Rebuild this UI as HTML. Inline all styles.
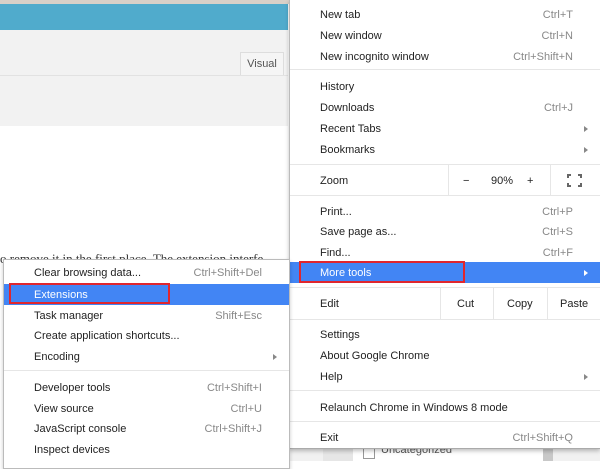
<!DOCTYPE html>
<html><head><meta charset="utf-8"><style>
*{margin:0;padding:0;box-sizing:border-box}
body{width:600px;height:461px;overflow:hidden;position:relative;background:#fff;font-family:"Liberation Sans",sans-serif;font-size:11px;color:#222}
.a{position:absolute}
.it{position:absolute;left:0;right:0;height:21px;line-height:23px}
.it .l{position:absolute;left:30px}
.it .s{position:absolute;right:27px;color:#888}
.it .ar{position:absolute;right:12px;top:8px;width:0;height:0;border-left:4px solid #888;border-top:3px solid transparent;border-bottom:3px solid transparent}
.sep{position:absolute;left:0;right:0;height:1px;background:#e6e6e6}
.hl{background:#4285f4;color:#fff}
.hl .ar{border-left-color:#fff}
.vl{position:absolute;width:1px;background:#e6e6e6}
</style></head><body>
<div class="a" style="left:0;top:0;width:600px;height:4px;background:#d8d0c8"></div>
<div class="a" style="left:0;top:4px;width:288px;height:26px;background:#50abcc"></div>
<div class="a" style="left:0;top:30px;width:288px;height:96px;background:#f2f2f2"></div>
<div class="a" style="left:0;top:75px;width:288px;height:1px;background:#e2e2e2"></div>
<div class="a" style="left:240px;top:52px;width:44px;height:23px;background:#f5f5f5;border:1px solid #ddd;border-bottom:none;font-size:11px;line-height:22px;text-align:center;color:#555">Visual</div>
<div class="a" style="left:0;top:251px;width:288px;height:12px;overflow:hidden;font-family:'Liberation Serif',serif;font-size:13px;line-height:16px;color:#333;white-space:nowrap">o remove it in the first place. The extension interfe</div>
<div class="a" style="left:290px;top:440px;width:310px;height:21px;background:#f1f1f1"></div>
<div class="a" style="left:323px;top:440px;width:30px;height:21px;background:#e6e6e6"></div>
<div class="a" style="left:353px;top:440px;width:190px;height:21px;background:#fff"></div>
<div class="a" style="left:363px;top:447px;width:12px;height:12px;border:1px solid #999;background:#fff"></div>
<div class="a" style="left:381px;top:444px;font-size:11px;color:#555">Uncategorized</div>
<div class="a" style="left:543px;top:440px;width:10px;height:21px;background:#c8c8c8"></div>

<div class="a" style="left:289px;top:0;width:311px;height:449px;background:#fff;border-left:1px solid #bbb;border-bottom:1px solid #aaa;box-shadow:0 2px 4px rgba(0,0,0,.25)">
 <div class="it" style="top:4px"><span class="l">New tab</span><span class="s">Ctrl+T</span></div>
 <div class="it" style="top:25px"><span class="l">New window</span><span class="s">Ctrl+N</span></div>
 <div class="it" style="top:46px"><span class="l">New incognito window</span><span class="s">Ctrl+Shift+N</span></div>
 <div class="sep" style="top:69px"></div>
 <div class="it" style="top:76px"><span class="l">History</span></div>
 <div class="it" style="top:97px"><span class="l">Downloads</span><span class="s">Ctrl+J</span></div>
 <div class="it" style="top:118px"><span class="l">Recent Tabs</span><i class="ar"></i></div>
 <div class="it" style="top:139px"><span class="l">Bookmarks</span><i class="ar"></i></div>
 <div class="sep" style="top:164px"></div>
 <div class="it" style="top:170px"><span class="l">Zoom</span></div>
 <div class="vl" style="left:158px;top:164px;height:31px"></div>
 <div class="vl" style="left:260px;top:164px;height:31px"></div>
 <div class="a" style="left:173px;top:175px">−</div>
 <div class="a" style="left:201px;top:175px">90%</div>
 <div class="a" style="left:237px;top:175px">+</div>
 <div class="a" style="left:277px;top:174px;width:15px;height:13px;border:2px solid #666;"></div>
 <div class="a" style="left:281px;top:172px;width:7px;height:17px;background:#fff"></div>
 <div class="a" style="left:275px;top:178px;width:19px;height:5px;background:#fff"></div>
 <div class="sep" style="top:195px"></div>
 <div class="it" style="top:201px"><span class="l">Print...</span><span class="s">Ctrl+P</span></div>
 <div class="it" style="top:221px"><span class="l">Save page as...</span><span class="s">Ctrl+S</span></div>
 <div class="it" style="top:242px"><span class="l">Find...</span><span class="s">Ctrl+F</span></div>
 <div class="it hl" style="top:262px"><span class="l">More tools</span><i class="ar"></i></div>
 <div class="a" style="left:9px;top:261px;width:166px;height:22px;border:2px solid #e0262e"></div>
 <div class="sep" style="top:287px"></div>
 <div class="it" style="top:293px"><span class="l">Edit</span></div>
 <div class="vl" style="left:150px;top:287px;height:32px"></div>
 <div class="vl" style="left:203px;top:287px;height:32px"></div>
 <div class="vl" style="left:257px;top:287px;height:32px"></div>
 <div class="a" style="left:167px;top:298px">Cut</div>
 <div class="a" style="left:217px;top:298px">Copy</div>
 <div class="a" style="left:270px;top:298px">Paste</div>
 <div class="sep" style="top:319px"></div>
 <div class="it" style="top:324px"><span class="l">Settings</span></div>
 <div class="it" style="top:345px"><span class="l">About Google Chrome</span></div>
 <div class="it" style="top:366px"><span class="l">Help</span><i class="ar"></i></div>
 <div class="sep" style="top:390px"></div>
 <div class="it" style="top:397px"><span class="l">Relaunch Chrome in Windows 8 mode</span></div>
 <div class="sep" style="top:421px"></div>
 <div class="it" style="top:427px"><span class="l">Exit</span><span class="s">Ctrl+Shift+Q</span></div>
</div>

<div class="a" style="left:3px;top:259px;width:287px;height:210px;background:#fff;border:1px solid #bbb;box-shadow:0 2px 4px rgba(0,0,0,.2)">
 <div class="it" style="top:2px"><span class="l">Clear browsing data...</span><span class="s">Ctrl+Shift+Del</span></div>
 <div class="it hl" style="top:24px"><span class="l">Extensions</span></div>
 <div class="a" style="left:5px;top:23px;width:161px;height:21px;border:2px solid #e0262e"></div>
 <div class="it" style="top:45px"><span class="l">Task manager</span><span class="s">Shift+Esc</span></div>
 <div class="it" style="top:65px"><span class="l">Create application shortcuts...</span></div>
 <div class="it" style="top:86px"><span class="l">Encoding</span><i class="ar"></i></div>
 <div class="sep" style="top:110px"></div>
 <div class="it" style="top:117px"><span class="l">Developer tools</span><span class="s">Ctrl+Shift+I</span></div>
 <div class="it" style="top:138px"><span class="l">View source</span><span class="s">Ctrl+U</span></div>
 <div class="it" style="top:158px"><span class="l">JavaScript console</span><span class="s">Ctrl+Shift+J</span></div>
 <div class="it" style="top:179px"><span class="l">Inspect devices</span></div>
</div>
</body></html>
